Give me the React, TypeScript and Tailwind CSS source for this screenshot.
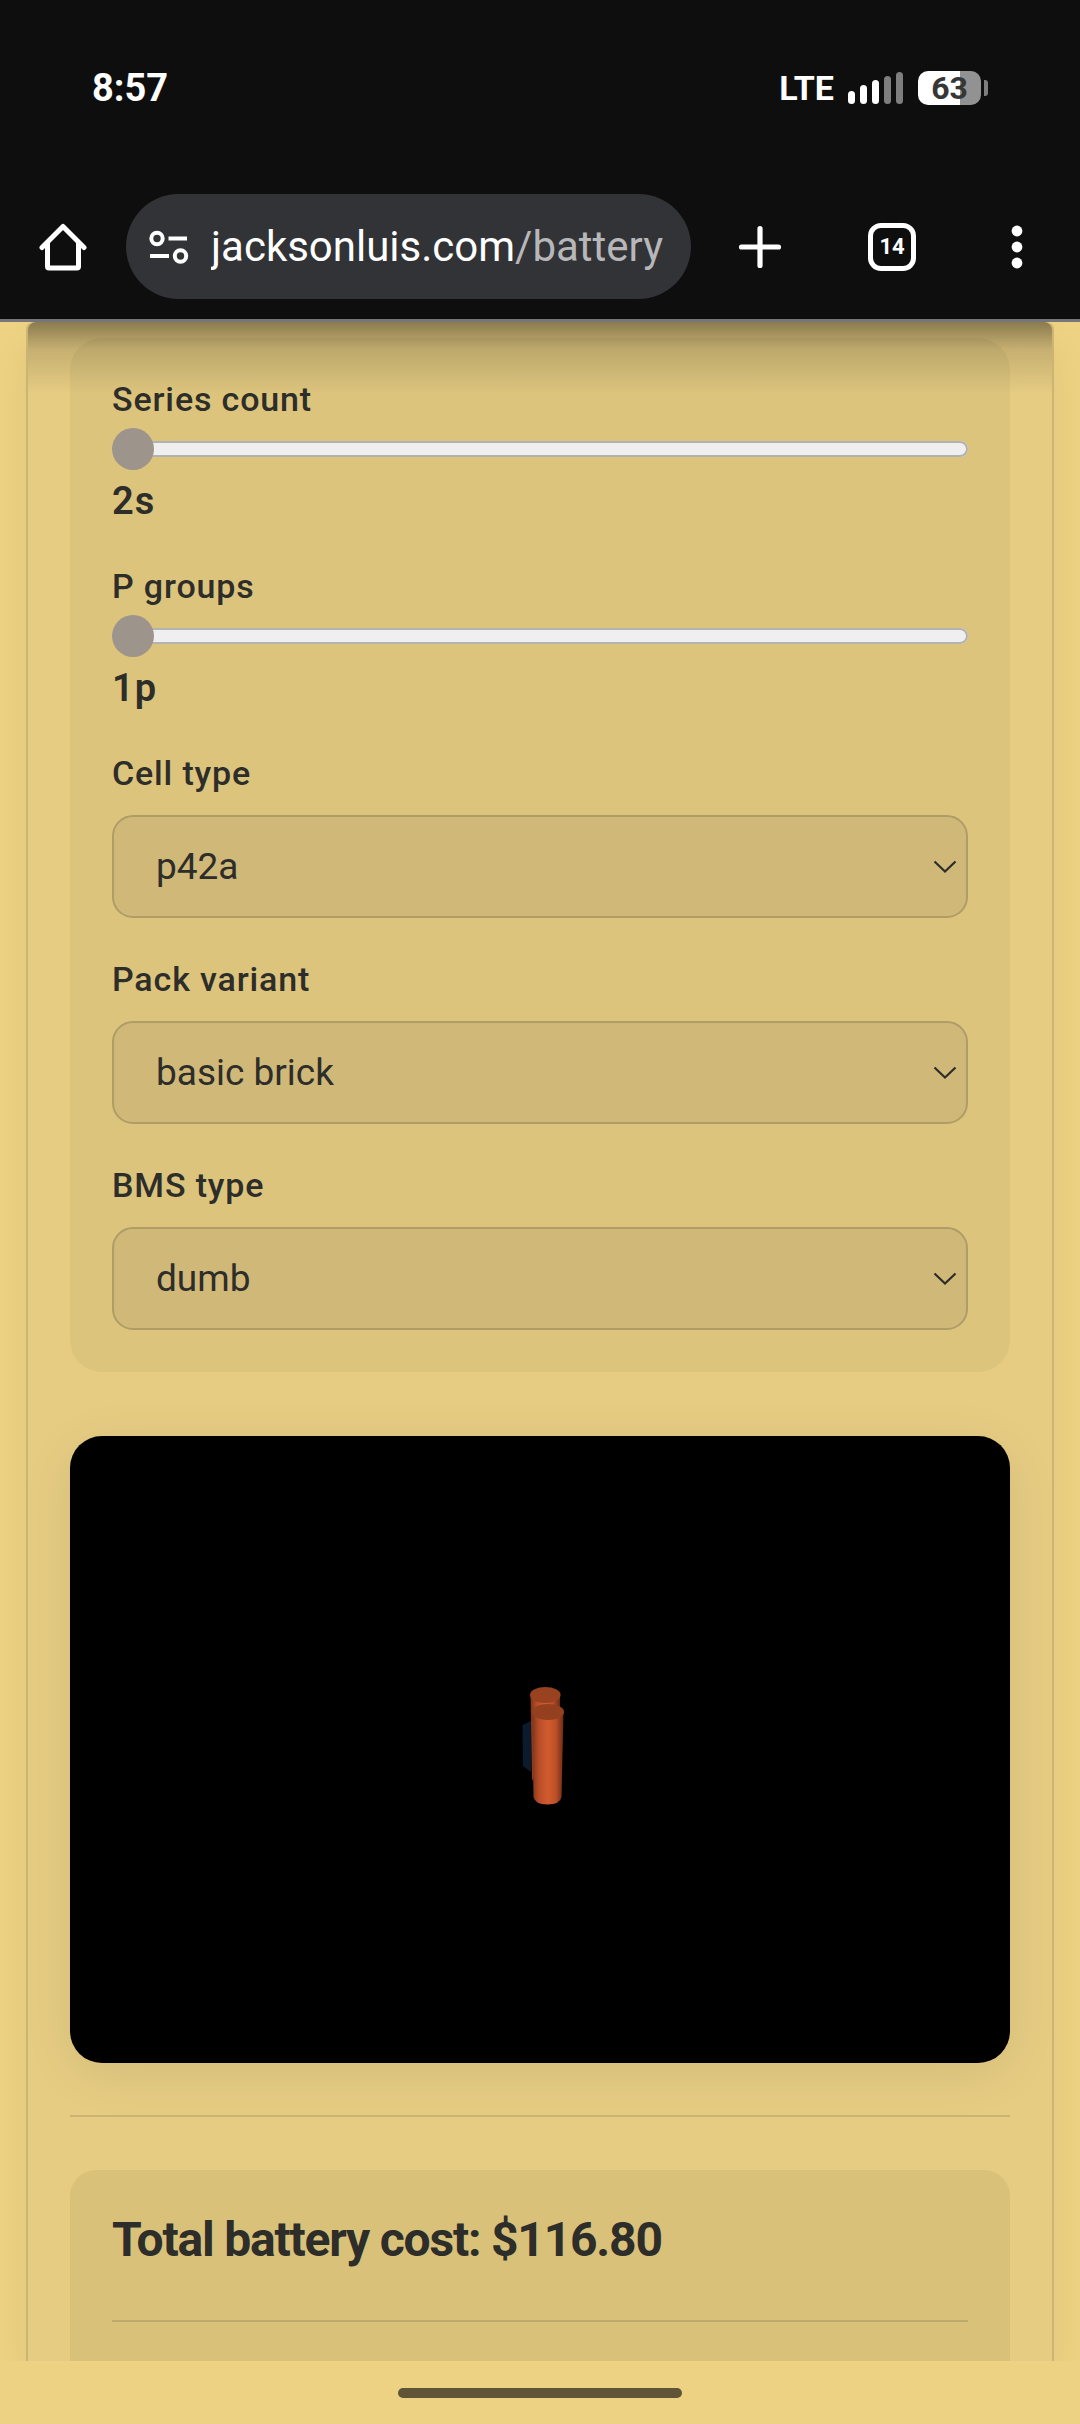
import { useState } from "react";

function StatusBar() {
  return (
    <div className="flex items-center justify-between pt-[66px] pl-[92px] pr-[92px] text-white">
      <span className="text-[38px] leading-[44px] font-bold">8:57</span>
      <div className="flex items-center gap-[14px]">
        <span className="text-[34px] leading-[44px] font-bold">LTE</span>
        <svg width="56" height="32" viewBox="0 0 56 32" aria-label="Signal strength" role="img">
          <rect x="0" y="19" width="7" height="13" rx="3.5" fill="#fff" />
          <rect x="12" y="13" width="7" height="19" rx="3.5" fill="#fff" />
          <rect x="24" y="8" width="7" height="24" rx="3.5" fill="#fff" />
          <rect x="36" y="4" width="7" height="28" rx="3.5" fill="#7e7e7e" />
          <rect x="48" y="0" width="7" height="32" rx="3.5" fill="#7e7e7e" />
        </svg>
        <div className="flex items-center gap-[3px]">
          <div className="flex h-[34px] w-[63px] items-center justify-center rounded-[10px] bg-linear-to-r from-white from-67% to-[#929292] to-67% text-[32px] leading-[34px] font-bold text-[#363636]">
            63
          </div>
          <div className="h-4 w-1 rounded-r-[3px] bg-[#7e7e7e]" />
        </div>
      </div>
    </div>
  );
}

function BrowserBar() {
  return (
    <div className="flex items-center pt-[84px] pb-5 text-white">
      <button aria-label="Home" className="flex w-[126px] justify-center">
        <svg width="48" height="48" viewBox="0 0 48 48" fill="none" stroke="#fff" strokeWidth="5" strokeLinecap="round" strokeLinejoin="round">
          <path d="M3 24.500L24 3.500L45 24.500" />
          <path d="M8.500 20V43.500Q8.500 45 10 45H38Q39.500 45 39.500 43.500V20" />
        </svg>
      </button>
      <div className="flex h-[105px] min-w-0 flex-1 items-center rounded-full bg-[#323337] pr-5 pl-[22px]">
        <button aria-label="Site information" className="shrink-0">
          <svg width="41" height="36" viewBox="0 0 41 36" fill="none" stroke="#fff" strokeWidth="4">
            <circle cx="9" cy="9.500" r="5.700" />
            <path d="M20.500 9.500H39M2 27H21" />
            <circle cx="32.500" cy="27" r="5.700" />
          </svg>
        </button>
        <a href="#battery" className="ml-[22px] min-w-0 flex-1 overflow-hidden text-[42px] leading-[52px] whitespace-nowrap text-[#b7b7ba]">
          <span className="text-white">jacksonluis.com</span>/battery
        </a>
      </div>
      <button aria-label="New tab" className="ml-[46px] flex w-[46px] justify-center">
        <svg width="44" height="44" viewBox="0 0 44 44" stroke="#fff" strokeWidth="5.200" strokeLinecap="round">
          <path d="M22 3.500V40.500M3.500 22H40.500" />
        </svg>
      </button>
      <button aria-label="Switch tabs" className="ml-[85px] flex size-12 items-center justify-center rounded-[13px] border-5 border-white text-[22px] leading-6 font-bold">
        14
      </button>
      <button aria-label="Menu" className="mr-[39px] ml-[77px] flex w-12 justify-center">
        <svg width="12" height="44" viewBox="0 0 12 44" fill="#fff">
          <circle cx="6" cy="6" r="5.400" />
          <circle cx="6" cy="22" r="5.400" />
          <circle cx="6" cy="38" r="5.400" />
        </svg>
      </button>
    </div>
  );
}

const labelClass = "text-[34px] leading-[38px] font-medium tracking-wide";

function SliderField({ id, label, min, max, suffix }: { id: string; label: string; min: number; max: number; suffix: string }) {
  const [value, setValue] = useState(min);
  return (
    <div className="flex flex-col">
      <label htmlFor={id} className={labelClass}>{label}</label>
      <input
        id={id}
        type="range"
        min={min}
        max={max}
        value={value}
        onChange={(e) => setValue(Number(e.target.value))}
        className="mt-[10px] block h-[42px] w-full appearance-none bg-transparent [&::-webkit-slider-runnable-track]:h-4 [&::-webkit-slider-runnable-track]:rounded-full [&::-webkit-slider-runnable-track]:bg-[#efefef] [&::-webkit-slider-runnable-track]:shadow-[inset_0_0_0_2px_#b2b2b2] [&::-webkit-slider-thumb]:mt-[-13px] [&::-webkit-slider-thumb]:size-[42px] [&::-webkit-slider-thumb]:appearance-none [&::-webkit-slider-thumb]:rounded-full [&::-webkit-slider-thumb]:bg-[#9d958c]"
      />
      <output htmlFor={id} className="mt-2 text-[38px] leading-[47px] font-semibold tracking-wide">{value}{suffix}</output>
    </div>
  );
}

function SelectField({ id, label, options }: { id: string; label: string; options: string[] }) {
  return (
    <div className="flex flex-col">
      <label htmlFor={id} className={labelClass}>{label}</label>
      <div className="relative mt-[23px]">
        <select
          id={id}
          className="block h-[103px] w-full appearance-none rounded-[21px] border-2 border-[#b09c66] bg-[#d0b878] px-[42px] text-[37px]"
        >
          {options.map((o) => (
            <option key={o}>{o}</option>
          ))}
        </select>
        <svg className="pointer-events-none absolute top-1/2 right-[11px] -translate-y-1/2" width="24" height="14" viewBox="0 0 24 14" fill="none" stroke="#2d2d2a" strokeWidth="2.200">
          <path d="M1.500 1.500L12 11.500L22.500 1.500" />
        </svg>
      </div>
    </div>
  );
}

function PackPreview() {
  return (
    <div className="mt-16 flex aspect-[3/2] items-center justify-center rounded-[32px] bg-black shadow-[0_10px_52px_rgba(0,0,0,0.08)]">
      <svg width="140" height="180" viewBox="-10 0 140 180" role="img" aria-label="Battery pack">
        <defs>
          <linearGradient id="front" x1="0" x2="1">
            <stop offset="0" stopColor="#7c3519" />
            <stop offset="0.2" stopColor="#b54c27" />
            <stop offset="0.5" stopColor="#d25b2e" />
            <stop offset="0.75" stopColor="#bd5029" />
            <stop offset="1" stopColor="#6c2c15" />
          </linearGradient>
        </defs>
        <path d="M42.500 66L51 62V113L43 107Z" fill="#0a1b2d" />
        <path d="M50.500 36H80V60L52 122Z" fill="url(#front)" />
        <ellipse cx="65.300" cy="36" rx="15.300" ry="8" fill="#98421f" />
        <path d="M52 53H83.500L81.500 138Q80 145.500 67.500 145.500Q55 145.500 53.500 138Z" fill="url(#front)" />
        <ellipse cx="68" cy="53" rx="16" ry="8" fill="#94401f" />
      </svg>
    </div>
  );
}

export default function App() {
  return (
    <div className="flex h-screen flex-col bg-[#edd283] font-['Roboto',sans-serif] text-[#2d2d2a]">
      <header className="shrink-0 border-b-3 border-[#77777b] bg-[#0e0e0e]">
        <StatusBar />
        <BrowserBar />
      </header>
      <main className="min-h-0 flex-1 overflow-hidden px-[26px]">
        <div className="relative rounded-t-[8px] border-x-2 border-[#ccb475] bg-[#e6cc83] px-[42px] pt-4 shadow-[0_24px_40px_rgba(0,0,0,0.06)]">
          <section className="flex flex-col gap-[42px] rounded-[32px] bg-[#dcc47d] p-[42px]">
            <SliderField id="series" label="Series count" min={2} max={20} suffix="s" />
            <SliderField id="groups" label="P groups" min={1} max={12} suffix="p" />
            <SelectField id="cell" label="Cell type" options={["p42a"]} />
            <SelectField id="variant" label="Pack variant" options={["basic brick"]} />
            <SelectField id="bms" label="BMS type" options={["dumb"]} />
          </section>
          <PackPreview />
          <hr className="mt-[52px] border-t-2 border-[#ccb475]" />
          <section className="mt-[53px] rounded-t-[26px] bg-[#d9c17a] p-[42px]">
            <h2 className="text-[48px] leading-[56px] font-bold tracking-tight">Total battery cost: $116.80</h2>
            <hr className="mt-[52px] border-t-2 border-[#bfaa6d]" />
          </section>
          <div className="pointer-events-none absolute inset-x-0 top-0 h-[72px] rounded-t-[8px] bg-linear-to-b from-black/40 via-black/14 via-38% to-transparent" />
        </div>
      </main>
      <footer className="relative flex h-[63px] shrink-0 items-center justify-center bg-[#edd283]">
        <div className="h-[10px] w-[284px] rounded-full bg-[#5f5435]" />
      </footer>
    </div>
  );
}
